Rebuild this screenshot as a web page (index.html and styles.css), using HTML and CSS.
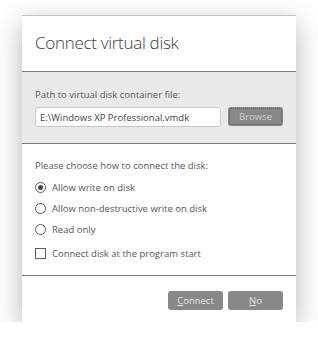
FILE: index.html
```html
<!DOCTYPE html>
<html lang="en">
<head>
    <meta charset="UTF-8">
    <title>Connect virtual disk</title>
    <link rel="stylesheet" href="styles.css">
</head>
<body>
    <div class="dialog">
        <div class="dialog-header">
            <h1>Connect virtual disk</h1>
        </div>

        <div class="path-section">
            <p class="label">Path to virtual disk container file:</p>
            <div class="path-row">
                <input type="text" class="path-input" value="E:\Windows XP Professional.vmdk">
                <button class="btn btn-focus">Browse</button>
            </div>
        </div>

        <div class="options">
            <p class="label">Please choose how to connect the disk:</p>
            <label class="option"><span class="radio checked"></span>Allow write on disk</label>
            <label class="option"><span class="radio"></span>Allow non-destructive write on disk</label>
            <label class="option"><span class="radio"></span>Read only</label>
            <label class="option check-option"><span class="checkbox"></span>Connect disk at the program start</label>
        </div>

        <div class="dialog-footer">
            <button class="btn"><u>C</u>onnect</button>
            <button class="btn"><u>N</u>o</button>
        </div>
    </div>
</body>
</html>
```

FILE: styles.css
```css
body {
    margin: 0;
    padding: 0;
    background-color: #ffffff;
    font-family: 'Open Sans', sans-serif;
    color: #555;
}

.dialog {
    width: 274px;
    height: 307px;
    margin: 15px 0 0 22px;
    background-color: #ffffff;
    border-top: 1px solid #c4c4c4;
    box-sizing: border-box;
    box-shadow: 0 8px 26px rgba(0, 0, 0, 0.3);
    display: flex;
    flex-direction: column;
}

.dialog-header {
    height: 56px;
    border-bottom: 1px solid #7a7a7a;
    padding-left: 13px;
    box-sizing: border-box;
}

.dialog-header h1 {
    margin: 0;
    padding-top: 15px;
    font-size: 17px;
    font-weight: 300;
    letter-spacing: -0.3px;
    color: #3c3c3c;
    line-height: 24px;
}

.label {
    margin: 0;
    font-size: 9.5px;
    line-height: 14px;
    color: #555;
}

.path-section {
    height: 72px;
    background-color: #e9e9e9;
    border-bottom: 1px solid #7a7a7a;
    padding: 16px 13px 0;
    box-sizing: border-box;
}

.path-row {
    display: flex;
    gap: 7px;
    margin-top: 5px;
}

.path-input {
    width: 186px;
    height: 20px;
    box-sizing: border-box;
    border: 1px solid #c8c8c8;
    border-radius: 3px;
    padding: 0 4px;
    font-family: 'Open Sans', sans-serif;
    font-size: 9.5px;
    color: #444;
    background-color: #fff;
}

.btn {
    width: 55px;
    height: 19px;
    border: none;
    border-radius: 3px;
    background-color: #888888;
    color: #e4e4e4;
    font-family: 'Open Sans', sans-serif;
    font-size: 9.5px;
    padding: 0;
}

.btn-focus {
    outline: 1px dotted #5a5a5a;
    outline-offset: -2px;
    color: #cfcfcf;
}

.options {
    height: 132px;
    border-bottom: 1px solid #7a7a7a;
    padding: 15px 13px 0;
    box-sizing: border-box;
}

.options .label {
    margin-bottom: 4px;
}

.option {
    display: flex;
    align-items: center;
    gap: 6px;
    height: 21px;
    font-size: 9.5px;
    color: #555;
}

.check-option {
    margin-top: 3px;
}

.radio {
    width: 11px;
    height: 11px;
    border: 1px solid #5c5c5c;
    border-radius: 50%;
    box-sizing: border-box;
    position: relative;
}

.radio.checked::after {
    content: "";
    position: absolute;
    left: 2px;
    top: 2px;
    width: 5px;
    height: 5px;
    border-radius: 50%;
    background-color: #444;
}

.checkbox {
    width: 11px;
    height: 11px;
    border: 1px solid #5c5c5c;
    box-sizing: border-box;
}

.dialog-footer {
    display: flex;
    justify-content: flex-end;
    gap: 5px;
    padding: 15px 13px 0;
}
```
